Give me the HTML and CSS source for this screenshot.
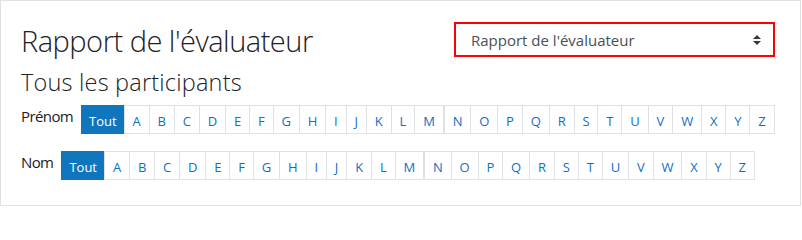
FILE: index.html
```html
<!DOCTYPE html>
<html lang="fr">
<head>
<meta charset="utf-8">
<title>Rapport de l'évaluateur</title>
<link rel="stylesheet" href="styles.css">
</head>
<body>
<div class="card">
  <div class="header">
    <h2 class="title">Rapport de l'évaluateur</h2>
    <div class="select">
      <span class="select-text">Rapport de l'évaluateur</span>
      <svg class="select-arrow" width="8" height="10" viewBox="0 0 8 10"><path d="M0 4 L4 0 L8 4 Z M0 6 L8 6 L4 10 Z" fill="#343a40"/></svg>
    </div>
  </div>
  <h3 class="subtitle">Tous les participants</h3>
  <div class="initialbar first">
    <span class="bar-label">Prénom</span>
    <ul class="pagination">
      <li class="page active">Tout</li><li class="page">A</li><li class="page">B</li><li class="page">C</li><li class="page">D</li><li class="page">E</li><li class="page">F</li><li class="page">G</li><li class="page">H</li><li class="page">I</li><li class="page">J</li><li class="page">K</li><li class="page">L</li><li class="page">M</li>
    </ul>
    <ul class="pagination">
      <li class="page">N</li><li class="page">O</li><li class="page">P</li><li class="page">Q</li><li class="page">R</li><li class="page">S</li><li class="page">T</li><li class="page">U</li><li class="page">V</li><li class="page">W</li><li class="page">X</li><li class="page">Y</li><li class="page">Z</li>
    </ul>
  </div>
  <div class="initialbar">
    <span class="bar-label">Nom</span>
    <ul class="pagination">
      <li class="page active">Tout</li><li class="page">A</li><li class="page">B</li><li class="page">C</li><li class="page">D</li><li class="page">E</li><li class="page">F</li><li class="page">G</li><li class="page">H</li><li class="page">I</li><li class="page">J</li><li class="page">K</li><li class="page">L</li><li class="page">M</li>
    </ul>
    <ul class="pagination">
      <li class="page">N</li><li class="page">O</li><li class="page">P</li><li class="page">Q</li><li class="page">R</li><li class="page">S</li><li class="page">T</li><li class="page">U</li><li class="page">V</li><li class="page">W</li><li class="page">X</li><li class="page">Y</li><li class="page">Z</li>
    </ul>
  </div>
</div>
</body>
</html>
```
FILE: styles.css
```css
html, body {
  margin: 0;
  padding: 0;
  background: #fff;
}
body {
  font-family: "Open Sans", "Noto Sans", sans-serif;
  color: #1d2125;
}
.card {
  box-sizing: border-box;
  width: 801px;
  height: 206px;
  border: 1px solid #dee2e6;
  padding: 21px 25px 0 20px;
}
.header {
  display: flex;
  justify-content: space-between;
  align-items: flex-start;
}
.title {
  margin: 0;
  font-size: 29px;
  font-weight: 300;
  line-height: 36px;
  letter-spacing: -0.5px;
  padding-top: 1px;
}
.select {
  box-sizing: border-box;
  width: 321px;
  height: 35px;
  border: 2px solid #ff0000;
  display: flex;
  align-items: center;
  justify-content: space-between;
  padding: 0 12px 0 15px;
  color: #495057;
  font-size: 15px;
}
.select-arrow {
  display: block;
}
.subtitle {
  margin: 9px 0 0 0;
  font-size: 23.5px;
  font-weight: 300;
  line-height: 28px;
  letter-spacing: 0.2px;
}
.initialbar {
  display: flex;
  align-items: flex-start;
  margin-top: 9px;
}
.initialbar.first {
  margin-bottom: 17px;
}
.initialbar + .initialbar {
  margin-top: 0;
}
.bar-label {
  font-size: 15px;
  line-height: 22px;
  margin-right: 8px;
  letter-spacing: -0.6px;
}
.pagination {
  display: flex;
  list-style: none;
  margin: 0;
  padding: 0;
}
.page {
  box-sizing: border-box;
  height: 29px;
  padding: 3px 7.9px 0;
  line-height: 24px;
  font-size: 13px;
  color: #0f6fc5;
  border: 1px solid #dee2e6;
  margin-left: -1px;
  background: #fff;
}
.page:first-child {
  margin-left: 0;
}
.page.active {
  background: #0f75bc;
  border-color: #0f75bc;
  color: #fff;
  padding-left: 7px;
  padding-right: 7px;
}
```
